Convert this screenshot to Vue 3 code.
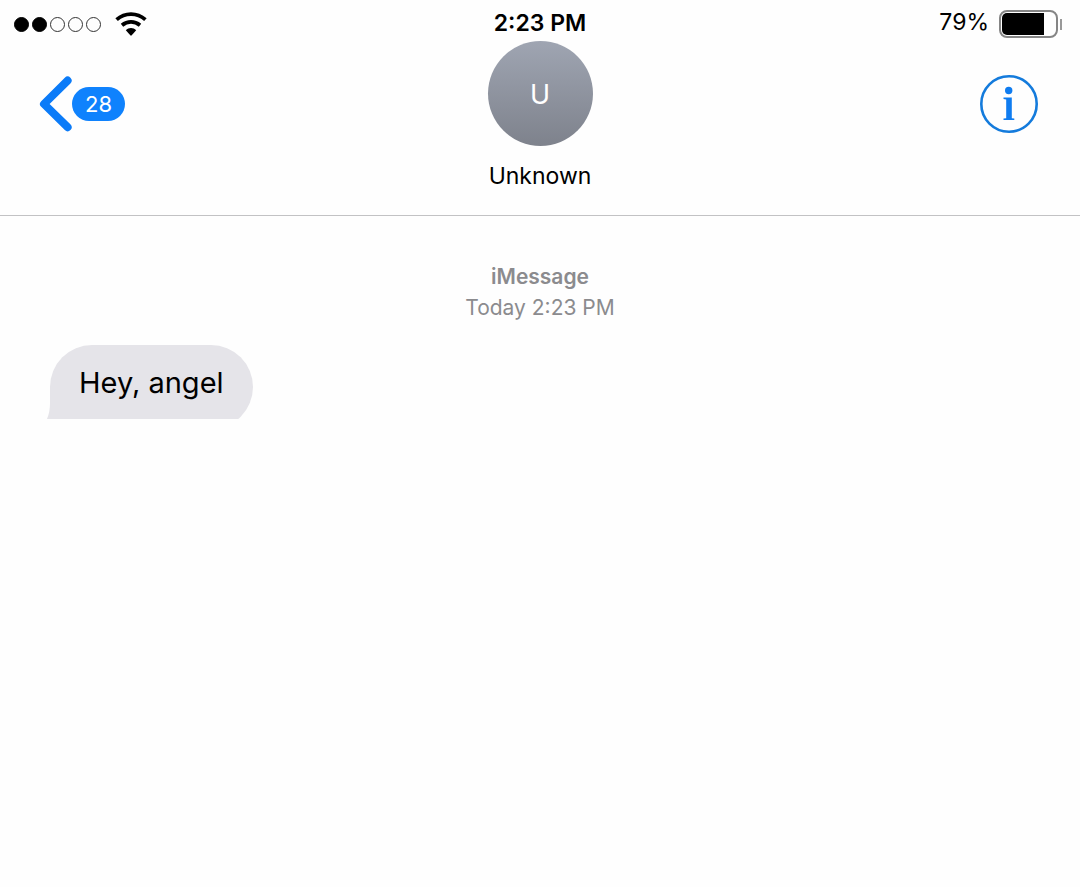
<script setup>
const signal = [true, true, false, false, false]
const battery = 79
const unread = 28
const contact = 'Unknown'
const messages = ['Hey, angel']
</script>

<template>
  <main class="phone">
    <header class="header">
      <div class="status">
        <div class="status-left">
          <div class="signal" role="img" aria-label="Signal strength">
            <span v-for="(on, i) in signal" :key="i" class="dot" :class="{ on }"></span>
          </div>
          <svg class="wifi" viewBox="0 0 32 25" role="img" aria-label="Wi-Fi">
            <path d="M1.6 7.6C10 .2 22 .2 30.4 7.6" />
            <path d="M7 13.2C12.4 8.8 19.6 8.8 25 13.2" />
            <path class="solid" d="M10.8 18.2C13.8 15.4 18.2 15.4 21.2 18.2L16.7 23.3Q16 24 15.3 23.3Z" />
          </svg>
        </div>
        <time class="clock">2:23 PM</time>
        <div class="status-right">
          <span class="percent">{{ battery }}%</span>
          <div class="battery">
            <div class="cell"><div class="charge" :style="{ width: battery + '%' }"></div></div>
            <div class="cap"></div>
          </div>
        </div>
      </div>

      <nav class="nav">
        <button class="back" type="button" aria-label="Back">
          <svg class="chevron" viewBox="0 0 34 56" aria-hidden="true">
            <path d="M29.6 4.6L6 28L29.6 51.2" />
          </svg>
          <span class="badge">{{ unread }}</span>
        </button>
        <div class="contact">
          <div class="avatar">{{ contact[0] }}</div>
          <h1 class="name">{{ contact }}</h1>
        </div>
        <button class="info" type="button" aria-label="Details">
          <svg viewBox="0 0 58 58" aria-hidden="true">
            <circle class="ring" cx="29" cy="29" r="27.7" />
            <circle class="glyph" cx="28.7" cy="15.5" r="3.7" />
            <path class="glyph" d="M23.5 22.5H31.8V43.2L34.3 43.6V45H23.5V43.6L26.2 43.2V24.5L23.5 24Z" />
          </svg>
        </button>
      </nav>
    </header>

    <section class="thread">
      <p class="stamp"><strong>iMessage</strong><span>Today 2:23 PM</span></p>
      <div v-for="text in messages" :key="text" class="message">
        <p class="bubble">{{ text }}</p>
        <svg class="tail" viewBox="0 0 8 32" aria-hidden="true"><path d="M3 0V16Q3 25 0 32H8V0Z" /></svg>
      </div>
    </section>
  </main>
</template>

<style>
body {
  background: #fefefe;
}
</style>

<style scoped>
.phone {
  min-height: 100vh;
  color: #000;
  background: #fefefe;
  font-family: Inter, "Liberation Sans", sans-serif;
}
.header {
  border-bottom: 1px solid #c2c2c4;
  padding-bottom: 23px;
}
.status {
  display: grid;
  grid-template-columns: 1fr auto 1fr;
  height: 41px;
  padding: 0 14px;
  box-sizing: border-box;
}
.status-left,
.status-right {
  display: flex;
  align-items: center;
  height: 48px;
}
.status-left {
  gap: 14px;
}
.status-right {
  justify-content: flex-end;
  gap: 10px;
  padding-right: 4px;
}
.signal {
  display: flex;
  gap: 3px;
}
.dot {
  box-sizing: border-box;
  width: 15px;
  height: 15px;
  border: 1px solid #333;
  border-radius: 50%;
}
.dot.on {
  border-color: #000;
  background: #000;
}
.wifi {
  width: 32px;
  height: 25px;
  fill: none;
  stroke: #000;
  stroke-width: 3.8;
}
.wifi .solid {
  fill: #000;
  stroke: none;
}
.clock {
  font-size: 23px;
  line-height: 46px;
  font-weight: 600;
}
.percent {
  font-size: 23px;
  line-height: 44px;
  align-self: flex-start;
}
.battery {
  display: flex;
  align-items: center;
  gap: 2px;
}
.cell {
  box-sizing: border-box;
  width: 59px;
  height: 28px;
  padding: 1px;
  border: 2px solid #858585;
  border-radius: 8px;
}
.charge {
  height: 100%;
  border-radius: 5px 0 0 5px;
  background: #000;
}
.cap {
  width: 2px;
  height: 11px;
  background: #999;
}
.nav {
  display: grid;
  grid-template-columns: 1fr auto 1fr;
  align-items: start;
  padding: 0 38px;
}
button {
  border: 0;
  padding: 0;
  background: none;
  font: inherit;
  cursor: pointer;
}
.back {
  display: flex;
  align-items: center;
  justify-self: start;
  margin-top: 35px;
}
.chevron {
  width: 34px;
  height: 56px;
  fill: none;
  stroke: #0b7bf8;
  stroke-width: 8;
  stroke-linecap: round;
  stroke-linejoin: round;
}
.badge {
  width: 53px;
  border-radius: 17px;
  color: #fff;
  background: #0f82fd;
  font-size: 22px;
  line-height: 34px;
  text-align: center;
}
.contact {
  display: flex;
  flex-direction: column;
  align-items: center;
}
.avatar {
  width: 105px;
  height: 105px;
  border-radius: 50%;
  color: #fff;
  background: linear-gradient(#9fa5b2, #7e828c);
  font-size: 27px;
  line-height: 107px;
  text-align: center;
}
.name {
  margin: 15px 0 0;
  font-size: 23px;
  line-height: 31px;
  font-weight: 400;
}
.info {
  justify-self: end;
  width: 58px;
  height: 58px;
  margin: 34px 4px 0 0;
}
.info svg {
  display: block;
}
.ring {
  fill: none;
  stroke: #147bdc;
  stroke-width: 2.6;
}
.glyph {
  fill: #0f7cf0;
}
.thread {
  padding: 45px 50px;
}
.stamp {
  display: flex;
  flex-direction: column;
  align-items: center;
  margin: 0 0 22px;
  color: #8b8b8e;
  font-size: 21px;
  line-height: 31px;
}
.stamp strong {
  font-weight: 600;
}
.message {
  position: relative;
  display: flex;
  height: 74px;
  clip-path: inset(0 0 0 -4px);
}
.bubble {
  box-sizing: border-box;
  height: 84px;
  margin: 0;
  padding: 18px 29px 26px;
  border-radius: 42px 42px 42px 0;
  background: #e5e4e9;
  font-size: 29px;
  line-height: 40px;
}
.tail {
  position: absolute;
  left: -3px;
  bottom: 0;
  width: 8px;
  height: 32px;
  fill: #e5e4e9;
}
</style>
